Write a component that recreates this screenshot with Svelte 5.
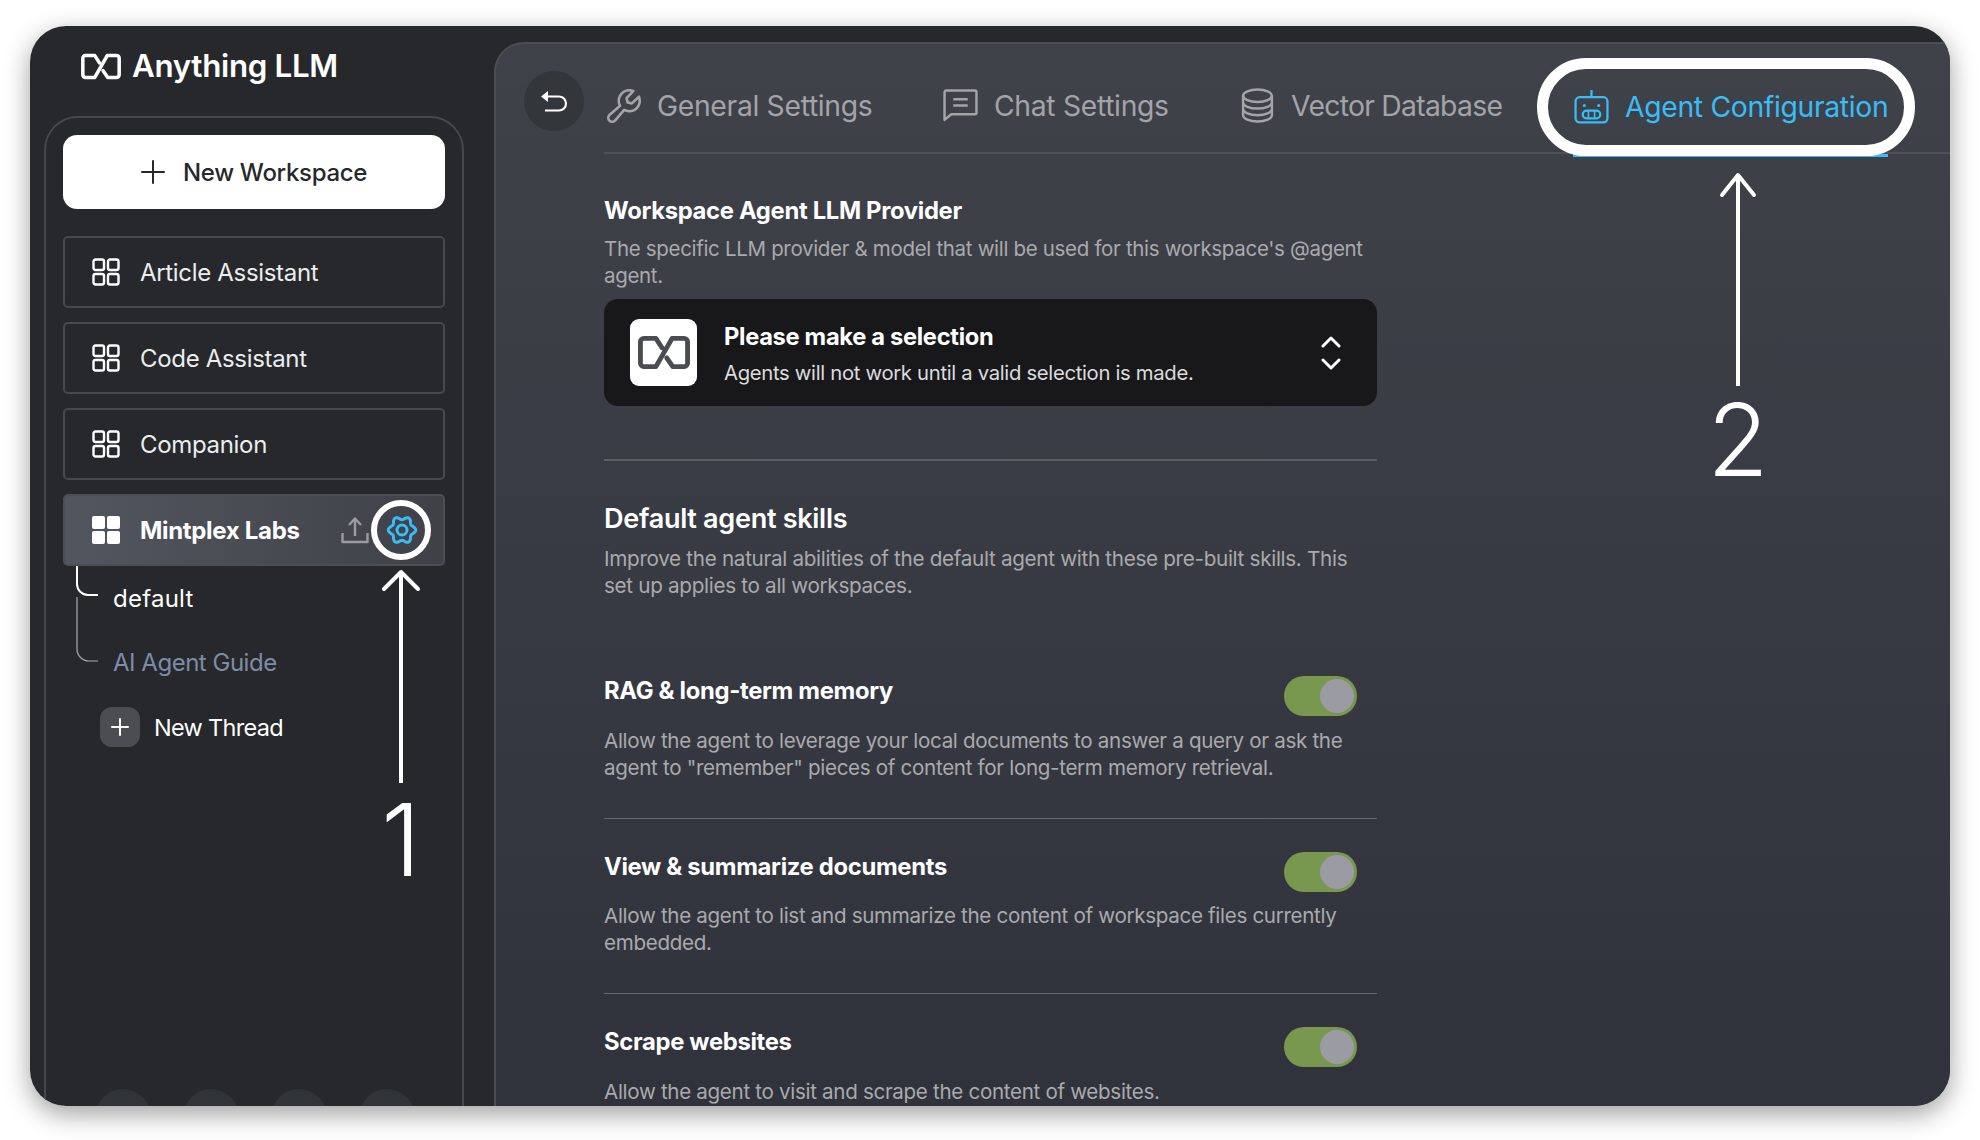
<script>
  const workspaces = ['Article Assistant', 'Code Assistant', 'Companion'];
  const skills = [
    { title: 'RAG & long-term memory', lines: 'Allow the agent to leverage your local documents to answer a query or ask the agent to "remember" pieces of content for long-term memory retrieval.' },
    { title: 'View & summarize documents', lines: 'Allow the agent to list and summarize the content of workspace files currently embedded.' },
    { title: 'Scrape websites', lines: 'Allow the agent to visit and scrape the content of websites.' }
  ];
  const logo = 'M18.500 9.500 14 2.500H5A2.500 2.500 0 0 0 2.500 5v16A2.500 2.500 0 0 0 5 23.500h9L26 2.500h9A2.500 2.500 0 0 1 37.500 5v16a2.500 2.500 0 0 1-2.500 2.500h-8.500L22 17';
  const gear = (() => {
    let d = '';
    for (let i = 0; i < 96; i++) {
      const t = (i / 96) * Math.PI * 2;
      const r = 12 + 1.7 * Math.cos(6 * t);
      d += (i ? 'L' : 'M') + (16 + r * Math.cos(t)).toFixed(2) + ' ' + (16 + r * Math.sin(t)).toFixed(2);
    }
    return d + 'Z';
  })();
</script>

<div class="window">
  <aside class="sidebar">
    <div class="brand">
      <svg class="brand-mark" viewBox="0 0 40 26" fill="none" stroke="#fff" stroke-width="3.400" stroke-linecap="round" stroke-linejoin="round"><path d={logo} /></svg>
      <span>Anything LLM</span>
    </div>
    <div class="panel">
      <div class="new-ws">
        <svg viewBox="0 0 24 24" fill="none" stroke="#26282c" stroke-width="2" stroke-linecap="round"><path d="M12 1v22M1 12h22" /></svg>
        <span>New Workspace</span>
      </div>
      {#each workspaces as w}
        <div class="ws">
          <svg class="grid" viewBox="0 0 28 28" fill="none" stroke="#fff" stroke-width="2.4"><rect x="1.5" y="1.5" width="10.5" height="10.5" rx="2" /><rect x="16" y="1.5" width="10.5" height="10.5" rx="2" /><rect x="1.5" y="16" width="10.5" height="10.5" rx="2" /><rect x="16" y="16" width="10.5" height="10.5" rx="2" /></svg>
          <span>{w}</span>
        </div>
      {/each}
      <div class="ws active">
        <svg class="grid" viewBox="0 0 28 28" fill="#fff"><rect x="0" y="0" width="13" height="13" rx="2" /><rect x="15" y="0" width="13" height="13" rx="2" /><rect x="0" y="15" width="13" height="13" rx="2" /><rect x="15" y="15" width="13" height="13" rx="2" /></svg>
        <span class="ws-name">Mintplex Labs</span>
        <svg class="upload" viewBox="0 0 28 28" fill="none" stroke="#9a9ca0" stroke-width="2.4" stroke-linejoin="round"><path d="M1.5 17v9h25v-9" /><path d="M14 20V3M8 9l6-6.500 6 6.500" /></svg>
        <svg class="gear" viewBox="0 0 32 32" fill="none" stroke="#38bdf8" stroke-width="3"><path d={gear} /><circle cx="16" cy="16" r="5" /></svg>
      </div>
      <div class="threads">
        <div class="thread current"><svg class="tree" viewBox="0 0 22 30" fill="none" stroke="#fff" stroke-width="2"><path d="M1 0v18a11 11 0 0 0 11 11h10" /></svg><span>default</span></div>
        <div class="thread muted"><svg class="tree long" viewBox="0 0 22 66" fill="none" stroke="#a6a9ad" stroke-width="1.200"><path d="M1 0v52a12 12 0 0 0 12 12h9" /></svg><span>AI Agent Guide</span></div>
        <div class="thread add">
          <div class="plus"><svg viewBox="0 0 20 20" fill="none" stroke="#fff" stroke-width="2" stroke-linecap="round"><path d="M10 2v16M2 10h16" /></svg></div>
          <span>New Thread</span>
        </div>
      </div>
      <div class="foot">
        <div class="dot"></div><div class="dot"></div><div class="dot"></div><div class="dot"></div>
      </div>
    </div>
  </aside>

  <main class="main">
    <header class="top">
      <div class="back">
        <svg viewBox="0 0 28 22" fill="none" stroke="#fff" stroke-width="2.200"><path d="M1 6.500 8 1v11z" fill="#fff" stroke="none" /><path d="M7 6.500h12a7 7 0 0 1 0 14H5" /></svg>
      </div>
      <nav class="tabs">
        <div class="tab t1">
          <svg class="ic wrench" viewBox="0 0 256 256" fill="#a3a4a8"><path d="M226.76,69a8,8,0,0,0-12.84-2.88l-40.3,37.19-17.23-3.7-3.7-17.23,37.19-40.3A8,8,0,0,0,187,29.24,72,72,0,0,0,88,96,72.34,72.34,0,0,0,94,124.94L33.79,177c-.15.12-.29.26-.43.39a32,32,0,0,0,45.26,45.26c.13-.13.27-.28.39-.42L131.06,162A72,72,0,0,0,232,96,71.56,71.56,0,0,0,226.76,69ZM160,152a56.14,56.14,0,0,1-27.07-7,8,8,0,0,0-9.92,1.77L67.11,211.51a16,16,0,0,1-22.62-22.62L109.18,133a8,8,0,0,0,1.77-9.93,56,56,0,0,1,58.36-82.31l-31.2,33.81a8,8,0,0,0-1.94,7.1L141.83,108a8,8,0,0,0,6.14,6.14l26.35,5.66a8,8,0,0,0,7.1-1.94l33.81-31.2A56.06,56.06,0,0,1,160,152Z" /></svg>
          <span>General Settings</span>
        </div>
        <div class="tab t2">
          <svg class="ic" viewBox="0 0 34 32" fill="none" stroke="#a3a4a8" stroke-width="2.400" stroke-linejoin="round"><path d="M1.500 30V3a1.500 1.500 0 0 1 1.500-1.500h28A1.500 1.500 0 0 1 32.500 3v20a1.500 1.500 0 0 1-1.500 1.500H8z" /><path d="M10 10h14M10 16h14" /></svg>
          <span>Chat Settings</span>
        </div>
        <div class="tab t3">
          <svg class="ic db" viewBox="0 0 32 34" fill="none" stroke="#a3a4a8" stroke-width="2.400"><ellipse cx="16" cy="7.500" rx="14" ry="6" /><path d="M2 7.500v19c0 3.300 6.300 6 14 6s14-2.700 14-6v-19M2 14c0 3.300 6.300 6 14 6s14-2.700 14-6M2 20.500c0 3.300 6.300 6 14 6s14-2.700 14-6" /></svg>
          <span>Vector Database</span>
        </div>
        <div class="tab t4 on">
          <svg class="ic" viewBox="0 0 34 34" fill="none" stroke="#38bdf8" stroke-width="2.200"><rect x="1.500" y="8" width="31" height="24.500" rx="4" /><path d="M17 8V1" /><circle cx="10" cy="16" r="1.500" fill="#38bdf8" stroke="none" /><circle cx="24" cy="16" r="1.500" fill="#38bdf8" stroke="none" /><rect x="8.500" y="21" width="17" height="7.500" rx="3.700" /><path d="M14 21v7.500M20 21v7.500" stroke-width="1.600" /></svg>
          <span>Agent Configuration</span>
        </div>
      </nav>
    </header>

    <section class="content">
      <h3 class="first">Workspace Agent LLM Provider</h3>
      <p class="desc d1">The specific LLM provider &amp; model that will be used for this workspace's @agent agent.</p>
      <div class="select">
        <div class="sel-logo"><svg viewBox="0 0 40 26" fill="none" stroke="#4a4c50" stroke-width="3.600" stroke-linecap="round" stroke-linejoin="round"><path d={logo} /></svg></div>
        <div class="sel-text">
          <div class="sel-title">Please make a selection</div>
          <div class="sel-sub">Agents will not work until a valid selection is made.</div>
        </div>
        <svg class="updown" viewBox="0 0 20 34" fill="none" stroke="#fff" stroke-width="3" stroke-linecap="round" stroke-linejoin="round"><path d="M2 10l8-8 8 8M2 24l8 8 8-8" /></svg>
      </div>
      <div class="rule"></div>
      <h2>Default agent skills</h2>
      <p class="desc d2">Improve the natural abilities of the default agent with these pre-built skills. This set up applies to all workspaces.</p>
      <div class="skills">
        {#each skills as s}
          <div class="skill">
            <div class="skill-head">
              <h3>{s.title}</h3>
              <div class="toggle"><div class="knob"></div></div>
            </div>
            <p class="desc">{s.lines}</p>
          </div>
        {/each}
      </div>
    </section>
  </main>

  <div class="ann ring-gear"></div>
  <div class="ann ring-tab"></div>
  <svg class="ann arrow a1" viewBox="0 0 40 214" fill="none" stroke="#fff" stroke-width="4" stroke-linecap="round" stroke-linejoin="round"><path d="M20 3v211" stroke-linecap="butt" /><path d="M3 20 20 3l17 17" /></svg>
  <svg class="ann arrow a2" viewBox="0 0 40 214" fill="none" stroke="#fff" stroke-width="4" stroke-linecap="round" stroke-linejoin="round"><path d="M20 3v211" stroke-linecap="butt" /><path d="M4 23 20 3l16 20" /></svg>
  <div class="ann num n1">1</div>
  <div class="ann num n2">2</div>
</div>

<style>
  :global(body) { margin: 0; background: #fff; }
  * { box-sizing: border-box; }
  .window {
    position: absolute; left: 30px; top: 26px; width: 1920px; height: 1080px;
    display: flex; overflow: hidden; border-radius: 36px; background: #26282c;
    font-family: Inter, "Noto Sans", sans-serif; letter-spacing: -0.02em; color: #fff;
  }
  :global(#app)::before {
    content: ""; position: absolute; left: 30px; top: 26px; width: 1920px; height: 1080px;
    border-radius: 36px; box-shadow: 0 8px 26px rgba(0,0,0,.38);
  }
  .sidebar { width: 464px; flex: none; display: flex; flex-direction: column; }
  .brand { height: 90px; flex: none; padding: 27px 0 0 50px; display: flex; align-items: flex-start; gap: 10px; font-size: 31.300px; font-weight: 600; line-height: 26px; }
  .brand-mark { width: 42px; height: 27px; flex: none; }
  .panel { margin-left: 14px; width: 420px; height: 1060px; flex: none; border: 2px solid #45474c; border-radius: 34px; padding: 17px 17px 29px; display: flex; flex-direction: column; }
  .new-ws { height: 74px; flex: none; background: #fff; border-radius: 14px; color: #26282c; display: flex; align-items: center; justify-content: center; gap: 18px; font-size: 24px; font-weight: 500; margin-bottom: 27px; }
  .new-ws svg { width: 24px; height: 24px; }
  .ws { height: 72px; flex: none; border: 2px solid #47494e; border-radius: 5px; display: flex; align-items: center; padding-left: 27px; gap: 20px; font-size: 24px; margin-bottom: 14px; color: #eceded; }
  .grid { width: 28px; height: 28px; flex: none; }
  .ws.active { background: linear-gradient(90deg, #52565e, #3f4147); border-color: #4b4e54; margin-bottom: 0; color: #fff; }
  .ws-name { font-weight: 700; flex: 1; }
  .upload { width: 28px; height: 28px; flex: none; }
  .gear { width: 32px; height: 32px; flex: none; margin: 0 25px 0 -3px; }
  .threads { display: flex; flex-direction: column; }
  .thread { position: relative; display: flex; align-items: center; font-size: 24px; padding-left: 50px; height: 64px; }
  .tree { position: absolute; left: 13px; top: 0; width: 22px; height: 30px; }
  .current { height: 64px; letter-spacing: 0.01em; }
  .muted { color: #7f8ca6; letter-spacing: -0.02em; }
  .tree.long { top: -33px; height: 66px; }
  .add { padding-left: 37px; gap: 14px; height: 40px; margin-top: 13px; font-size: 23.500px; letter-spacing: -0.03em; }
  .plus { width: 40px; height: 40px; border-radius: 12px; background: #4b4d53; display: flex; align-items: center; justify-content: center; }
  .plus svg { width: 20px; height: 20px; }
  .foot { margin-top: auto; padding-left: 32px; display: flex; gap: 32px; }
  .dot { width: 56px; height: 56px; border-radius: 50%; background: #303338; }

  .main { flex: 1; margin-top: 16px; height: 1100px; border: solid #4b4d52; border-width: 2px 0 0 2px; border-top-left-radius: 30px; background: linear-gradient(180deg, #3f4249 0%, #2f323a 100%); padding: 27px 0 0 28px; display: flex; flex-direction: column; }
  .top { display: flex; gap: 20px; align-items: flex-start; }
  .back { width: 60px; height: 60px; flex: none; border-radius: 50%; background: #33363b; display: flex; align-items: center; justify-content: center; }
  .back svg { width: 28px; height: 22px; }
  .tabs { flex: 1; height: 83px; border-bottom: 2px solid #4d5056; display: flex; align-items: flex-start; position: relative; }
  .tab { height: 83px; display: flex; align-items: center; gap: 16px; font-size: 28.300px; color: #a3a4a8; padding-bottom: 14px; flex: none; }
  .t1 { padding-left: 3px; width: 339px; }
  .t2 { width: 297px; }
  .t3 { width: 333px; letter-spacing: -0.025em; }
  .t4 { padding-left: 1px; }
  .tab.on { color: #38bdf8; border-bottom: 3px solid #38bdf8; height: 86px; padding-bottom: 12px; }
  .ic { width: 35px; height: 35px; flex: none; }
  .wrench { width: 42px; height: 42px; margin: 0 -4px 0 -4px; }
  .content { margin-left: 80px; width: 773px; }
  h3 { margin: 0; font-size: 23.800px; font-weight: 700; line-height: 30px; }
  .first { margin-top: 42px; }
  .desc { margin: 0; font-size: 20.600px; line-height: 27px; color: #a9aaad; font-weight: 400; }
  .d1 { margin-top: 9px; font-size: 20.500px; }
  .select { margin-top: 10px; height: 107px; background: #18181b; border-radius: 14px; display: flex; align-items: center; padding: 0 36px 0 26px; }
  .sel-logo { width: 67px; height: 67px; background: #fff; border-radius: 9px; display: flex; align-items: center; justify-content: center; flex: none; }
  .sel-logo svg { width: 54px; height: 35px; }
  .sel-text { flex: 1; margin-left: 27px; padding-top: 3px; }
  .sel-title { font-size: 23.700px; font-weight: 700; line-height: 30px; }
  .sel-sub { font-size: 20.300px; line-height: 26px; margin-top: 8px; color: #dcdcde; }
  .updown { width: 20px; height: 34px; flex: none; }
  .rule { margin-top: 53px; height: 2px; background: #5c5e63; }
  h2 { margin: 40px 0 0; font-size: 27.100px; font-weight: 600; line-height: 36px; }
  .desc.d2 { margin-top: 8px; max-width: 760px; font-size: 20.700px; }
  .skills { margin-top: 44px; }
  .skill { padding: 33px 0 0; border-bottom: 1px solid #65676b; height: 175.500px; }
  .skill-head { display: flex; justify-content: space-between; align-items: flex-start; height: 40px; padding-right: 20px; }
  .skill .desc { margin-top: 10.500px; }
  .toggle { width: 73px; height: 40px; border-radius: 20px; background: #77984e; display: flex; align-items: center; justify-content: flex-end; padding-right: 3px; }
  .knob { width: 34px; height: 34px; border-radius: 50%; background: #9b9ca3; }

  .ann { position: absolute; pointer-events: none; }
  .ring-gear { left: 341px; top: 474px; width: 60px; height: 60px; border: 6px solid #fff; border-radius: 50%; }
  .ring-tab { left: 1507px; top: 32px; width: 378px; height: 98px; border: 11px solid #fff; border-radius: 49px; }
  .arrow { width: 40px; height: 214px; }
  .a1 { left: 351px; top: 543px; }
  .a2 { left: 1688px; top: 146px; }
  .num { font-size: 100px; font-weight: 350; line-height: 100px; color: #fff; width: 80px; text-align: center; letter-spacing: 0; }
  .n1 { left: 331px; top: 764px; }
  .n2 { left: 1668px; top: 364px; font-weight: 300; }
</style>
